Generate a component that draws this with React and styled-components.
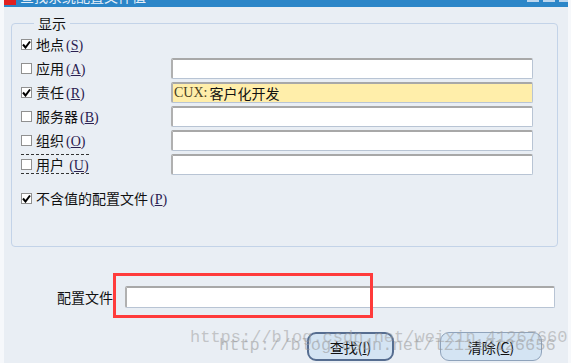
import React from 'react';
import styled, { createGlobalStyle } from 'styled-components';

const GlobalStyle = createGlobalStyle`
  html, body {
    margin: 0;
    padding: 0;
    background: #e9eef4;
  }
  body {
    font-family: "Noto Sans CJK SC", "Liberation Sans", sans-serif;
    font-size: 13px;
    color: #111;
  }
`;

const Window = styled.div`
  position: relative;
  width: 571px;
  height: 363px;
  box-sizing: border-box;
  background: #e9eef4;
  border-left: 4px solid #f6f8fb;
  border-right: 3px solid #f6f8fb;
  overflow: hidden;
`;

const TitleBar = styled.div`
  display: flex;
  align-items: flex-start;
  height: 7px;
  margin-left: -4px;
  margin-right: -3px;
  background: #2c86c8;
  overflow: hidden;
`;

const AppIcon = styled.div`
  width: 16px;
  height: 5px;
  background: #e02020;
  flex-shrink: 0;
`;

const TitleText = styled.div`
  margin-left: 4px;
  margin-top: -12px;
  color: #e8f0f8;
  font-size: 14px;
  line-height: 16px;
  white-space: nowrap;
  flex: 1;
`;

const WinButtons = styled.div`
  display: flex;
  gap: 4px;
`;

const WinButton = styled.div`
  width: 12px;
  height: 2px;
  background: #bcd6ee;
`;

const Group = styled.fieldset`
  margin: 8px 0 0 7px;
  width: 547px;
  height: 232px;
  box-sizing: border-box;
  border: 1px solid #c3d3e8;
  border-radius: 4px;
  padding: 1px 0 0 9px;
`;

const Legend = styled.legend`
  margin-left: 13px;
  padding: 0 4px;
  font-size: 14px;
  line-height: 16px;
`;

const Grid = styled.div`
  display: grid;
  grid-template-columns: 150px 362px;
  grid-auto-rows: 24px;
  align-items: center;
`;

const Label = styled.label`
  display: flex;
  align-items: center;
  gap: 4px;
  height: 20px;
  font-size: 14px;
  white-space: pre;
  ${(p) => p.dotted && `
    width: 68px;
    border-top: 1px dashed #333;
    border-bottom: 1px dashed #333;
    box-sizing: border-box;
  `}
`;

const Box = styled.span`
  display: inline-flex;
  align-items: center;
  justify-content: center;
  width: 11px;
  height: 11px;
  box-sizing: border-box;
  border: 1px solid #909090;
  background: #fff;
  flex-shrink: 0;
`;

const Key = styled.span`
  font-family: "Liberation Serif", serif;
  font-size: 14px;
  color: #2a2050;
  margin-left: 2px;
`;

const U = styled.span`
  text-decoration: underline;
`;

const Field = styled.div`
  height: 21px;
  box-sizing: border-box;
  border: 1px solid #b8c4d4;
  border-top: 2px solid #a8a8a8;
  border-left: 2px solid #b0b0b0;
  border-radius: 2px;
  background: ${(p) => (p.yellow ? '#ffeeaa' : '#fff')};
  display: flex;
  align-items: center;
  padding-left: 1px;
  font-size: 14px;
`;

const Mono = styled.span`
  font-family: "Liberation Serif", serif;
  font-size: 14px;
  color: #4a4020;
  margin-right: 2px;
`;

const Spacer = styled.div`
  height: 12px;
`;

const ProfileRow = styled.div`
  display: flex;
  align-items: center;
  gap: 12px;
  margin: 39px 0 0 0;
`;

const ProfileLabel = styled.div`
  width: 109px;
  text-align: right;
  font-size: 14px;
`;

const ProfileField = styled(Field)`
  width: 430px;
  height: 22px;
`;

const ButtonRow = styled.div`
  display: flex;
  justify-content: flex-end;
  gap: 46px;
  margin: 24px 26px 0 0;
`;

const Button = styled.button`
  height: 29px;
  width: ${(p) => p.w}px;
  box-sizing: border-box;
  border: ${(p) => (p.primary ? '2px solid #566d90' : '1.5px solid #8fa3bb')};
  border-radius: 9px;
  background: #d4e4f3;
  font-family: "Noto Sans CJK SC", sans-serif;
  font-size: 14px;
  color: #111;
  padding: 0;
`;

const Highlight = styled.div`
  position: absolute;
  left: 109px;
  top: 273px;
  width: 260px;
  height: 45px;
  box-sizing: border-box;
  border: 3px solid #ff3b3b;
  pointer-events: none;
`;

const Watermark = styled.div`
  position: absolute;
  left: ${(p) => p.x}px;
  top: ${(p) => p.y}px;
  font-family: "Liberation Mono", monospace;
  font-size: 17px;
  color: ${(p) => p.c};
  white-space: nowrap;
  pointer-events: none;
`;

function Check({ on }) {
    return (
        <Box>
            {on && (
                <svg width="9" height="9" viewBox="0 0 9 9">
                    <path d="M1 4.5 L3.5 7.5 L8 1.5" stroke="#000" strokeWidth="2" fill="none" />
                </svg>
            )}
        </Box>
    );
}

function Opt({ on, text, k, dotted }) {
    return (
        <Label dotted={dotted}>
            <Check on={on} />
            <span>
                {text}
                <Key>(<U>{k}</U>)</Key>
            </span>
        </Label>
    );
}

export default function App() {
    return (
        <Window>
            <GlobalStyle />
            <TitleBar>
                <AppIcon />
                <TitleText>查找系统配置文件值</TitleText>
                <WinButtons>
                    <WinButton />
                    <WinButton />
                    <WinButton />
                </WinButtons>
            </TitleBar>
            <Group>
                <Legend>显示</Legend>
                <Grid>
                    <Opt on text="地点" k="S" />
                    <div />
                    <Opt text="应用" k="A" />
                    <Field />
                    <Opt on text="责任" k="R" />
                    <Field yellow>
                        <Mono>CUX:</Mono>客户化开发
                    </Field>
                    <Opt text="服务器" k="B" />
                    <Field />
                    <Opt text="组织" k="O" />
                    <Field />
                    <Opt text={'用户 '} k="U" dotted />
                    <Field />
                </Grid>
                <Spacer />
                <Opt on text="不含值的配置文件" k="P" />
            </Group>
            <ProfileRow>
                <ProfileLabel>配置文件</ProfileLabel>
                <ProfileField />
            </ProfileRow>
            <ButtonRow>
                <Button primary w={87}>查找(<U>I</U>)</Button>
                <Button w={102}>清除(<U>C</U>)</Button>
            </ButtonRow>
            <Highlight />
            <Watermark x={186} y={328} c="rgba(160,160,160,0.55)">https://blog.csdn.net/weixin_41267660</Watermark>
            <Watermark x={215} y={336} c="rgba(150,150,150,0.55)">http://blog.csdn.net/lz1110126656</Watermark>
        </Window>
    );
}
